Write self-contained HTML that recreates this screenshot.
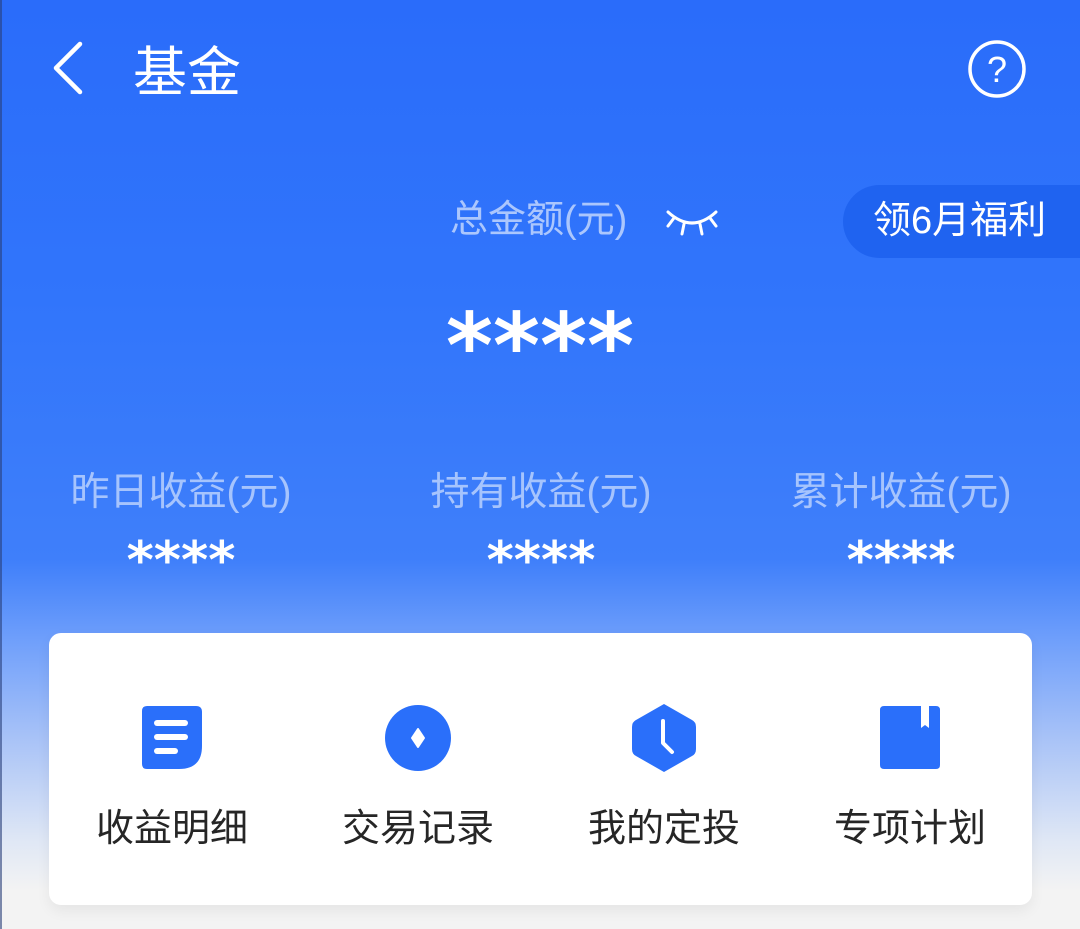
<!DOCTYPE html>
<html><head><meta charset="utf-8">
<style>
html,body{margin:0;padding:0}
body{width:1080px;height:929px;overflow:hidden;position:relative;
font-family:"Liberation Sans","Noto Sans CJK SC",sans-serif;
background:linear-gradient(180deg,#2a6cfa 0px,#3175fb 300px,#3f7ffa 560px,#6f9ffb 640px,#a9c3f7 740px,#dfe7f5 840px,#f3f3f3 890px,#f3f3f3 929px);}
.edge{position:absolute;left:0;top:0;width:2px;height:929px;background:#2a3f7a;opacity:.6}
.t{position:absolute;white-space:nowrap}
.card{position:absolute;left:49px;top:633px;width:983px;height:272px;background:#fff;border-radius:12px;box-shadow:0 6px 14px rgba(0,0,0,.06)}
.lab{position:absolute;top:797px;font-size:38px;color:#262626;width:200px;text-align:center}
.m{position:absolute;top:461px;font-size:39px;color:rgba(255,255,255,.55);width:300px;text-align:center}
.s{position:absolute;top:535px;font-size:52px;line-height:52px;font-weight:bold;font-family:"DejaVu Sans",sans-serif;color:#fff;width:300px;text-align:center}
</style></head><body>
<div class="edge"></div>
<svg style="position:absolute;left:48px;top:40px" width="40" height="56"><path d="M32 4 L8 28 L32 52" fill="none" stroke="#fff" stroke-width="4.5" stroke-linecap="round" stroke-linejoin="round"/></svg>
<div class="t" style="left:133px;top:28px;font-size:54px;color:#fff">基金</div>
<svg style="position:absolute;left:966px;top:38px" width="62" height="62"><circle cx="31" cy="31" r="27" fill="none" stroke="#fff" stroke-width="3.5"/><text x="31" y="44" text-anchor="middle" fill="#fff" font-size="36" font-family="Liberation Sans">?</text></svg>
<div class="t" style="left:450px;top:188px;font-size:38px;color:rgba(255,255,255,.6)">总金额(元)</div>
<svg style="position:absolute;left:664px;top:204px" width="56" height="32"><path d="M4 8 Q28 30 52 8 M10 14 L4 22 M20 20 L18 30 M36 20 L38 30 M46 14 L52 22" fill="none" stroke="#fff" stroke-width="3" stroke-linecap="round"/></svg>
<div style="position:absolute;left:843px;top:185px;width:240px;height:73px;background:#1f63f0;border-radius:37px 0 0 37px"></div>
<div class="t" style="left:873px;top:189px;font-size:38px;color:#fff">领6月福利</div>
<div class="t" style="left:390px;top:302px;width:300px;text-align:center;font-size:90px;line-height:90px;font-weight:bold;font-family:'DejaVu Sans',sans-serif;color:#fff">****</div>
<div class="m" style="left:31px">昨日收益(元)</div>
<div class="m" style="left:391px">持有收益(元)</div>
<div class="m" style="left:751px">累计收益(元)</div>
<div class="s" style="left:31px">****</div>
<div class="s" style="left:391px">****</div>
<div class="s" style="left:751px">****</div>
<div class="card"></div>
<svg style="position:absolute;left:142px;top:706px" width="60" height="64"><path d="M5 0 H54 Q60 0 60 6 V40 Q60 63 37 63 H5 Q0 63 0 58 V5 Q0 0 5 0Z" fill="#2a6ffa"/><rect x="12" y="14" width="34" height="6" rx="3" fill="#fff"/><rect x="12" y="28" width="34" height="6" rx="3" fill="#fff"/><rect x="12" y="42" width="24" height="6" rx="3" fill="#fff"/></svg>
<svg style="position:absolute;left:385px;top:705px" width="66" height="66"><circle cx="33" cy="33" r="33" fill="#2a6ffa"/><path d="M33 24 L39 33 L33 42 L27 33Z" fill="#fff" stroke="#fff" stroke-width="2" stroke-linejoin="round"/></svg>
<svg style="position:absolute;left:632px;top:703px" width="64" height="70"><path d="M32 1 L60 17 Q64 19 64 24 V46 Q64 51 60 53 L32 69 L4 53 Q0 51 0 46 V24 Q0 19 4 17Z" fill="#2a6ffa"/><path d="M31 18 V40 L40 49" fill="none" stroke="#fff" stroke-width="4" stroke-linecap="round" stroke-linejoin="round"/></svg>
<svg style="position:absolute;left:880px;top:706px" width="60" height="64"><path d="M4 0 H56 Q60 0 60 4 V59 Q60 63 56 63 H4 Q0 63 0 59 V4 Q0 0 4 0Z" fill="#2a6ffa"/><path d="M41 0 V22 L45 19 L49 22 V0Z" fill="#fff"/></svg>
<div class="lab" style="left:72px">收益明细</div>
<div class="lab" style="left:318px">交易记录</div>
<div class="lab" style="left:564px">我的定投</div>
<div class="lab" style="left:810px">专项计划</div>
</body></html>
